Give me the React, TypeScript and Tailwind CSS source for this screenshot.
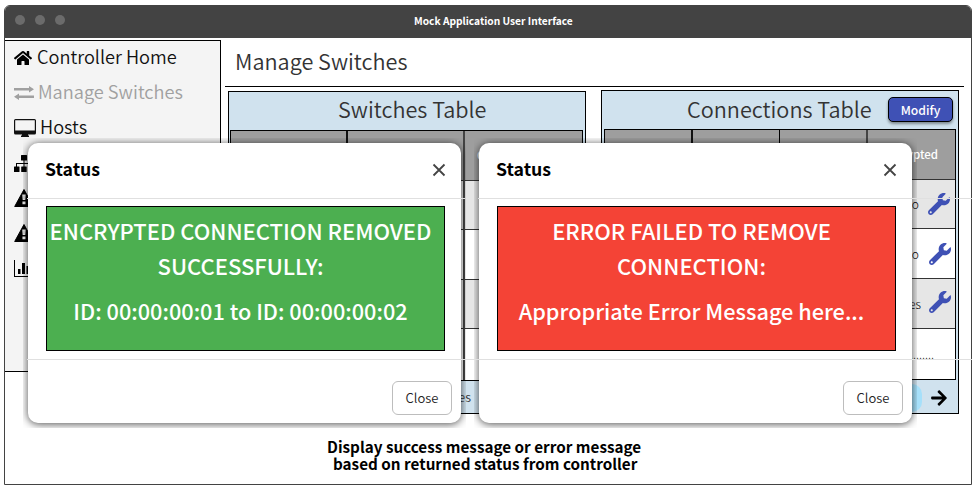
import type { ReactNode } from "react";
import { FaArrowRight, FaHome, FaWrench } from "react-icons/fa";

function ExchangeIcon() {
  return (
    <svg width="20" height="14" viewBox="0 0 20 14" fill="currentColor">
      <path d="M0 2h15V0l5 3.300-5 3.300V4.500H0z" />
      <path d="M20 9.500H5V7.400L0 10.700 5 14v-2h15z" />
    </svg>
  );
}

function MonitorIcon() {
  return (
    <svg width="22" height="18" viewBox="0 0 22 18" fill="currentColor">
      <path fillRule="evenodd" d="M1.500 0h19A1.500 1.500 0 0 1 22 1.500v12.500a1.500 1.500 0 0 1-1.500 1.500H14v1h1V18H7v-1.500h1v-1H1.500A1.500 1.500 0 0 1 0 14V1.500A1.500 1.500 0 0 1 1.500 0zM1.200 1.200v10.300h19.600V1.200z" />
    </svg>
  );
}

function SitemapIcon() {
  return (
    <svg width="20" height="17" viewBox="0 0 20 17" fill="currentColor">
      <rect x="7" y="0" width="6" height="5.500" rx="0.500" />
      <path d="M9.500 5h1v3h7.500v4h-1V9h-6.500v3h-1V9H3v3H2V8h7.500z" />
      <rect x="0" y="11.500" width="5.500" height="5.500" rx="0.500" />
      <rect x="7.200" y="11.500" width="5.500" height="5.500" rx="0.500" />
      <rect x="14.500" y="11.500" width="5.500" height="5.500" rx="0.500" />
    </svg>
  );
}

function WarningIcon() {
  return (
    <svg width="20" height="18" viewBox="0 0 20 18">
      <path d="M10 0.500L19.300 17.500H0.700z" fill="currentColor" stroke="currentColor" strokeLinejoin="round" />
      <path d="M8.300 5.500h3.400l-0.400 5.500h-2.600zM8.500 12.500h3v2.800h-3z" fill="#f4f4f4" />
      <path d="M9.500 6.500h1v3.500h-1z" fill="#bbb" />
    </svg>
  );
}

function ChartIcon() {
  return (
    <svg width="22" height="17" viewBox="0 0 22 17" fill="currentColor">
      <path d="M0 0h1v16h21v1H0zM4 9h2.500v5H4zM8 3h3v11H8zM12.500 6h2.500v8h-2.500zM16 2h3v12h-3z" />
    </svg>
  );
}

function NavItem({ icon, label, className }: { icon: ReactNode; label?: string; className: string }) {
  return (
    <div className={`flex h-[35px] items-center pl-[9px] text-[18.200px] leading-[33px] font-[350] whitespace-nowrap ${className}`}>
      {icon}
      {label && <span className="pb-[2px]">{label}</span>}
    </div>
  );
}

function Sidebar() {
  return (
    <nav className="-ml-px mt-[2px] h-[332px] w-[217px] shrink-0 border border-black bg-[#f4f4f4]">
      <div className="-mt-px">
        <NavItem className="gap-[5px] text-[#111]" icon={<FaHome className="h-[18px] w-[18px] text-black" />} label="Controller Home" />
        <NavItem className="gap-[4px] text-[#a0a0a0]" icon={<ExchangeIcon />} label="Manage Switches" />
        <NavItem className="gap-[4px] text-[#111]" icon={<MonitorIcon />} label="Hosts" />
        <NavItem className="pt-[2px] text-black" icon={<SitemapIcon />} />
        <NavItem className="text-black" icon={<WarningIcon />} />
        <NavItem className="text-black" icon={<WarningIcon />} />
        <NavItem className="pt-px text-black" icon={<ChartIcon />} />
      </div>
    </nav>
  );
}

function SwitchesPanel() {
  return (
    <section className="mt-px h-[323px] w-[358px] border border-black bg-[#d0e2ee] pl-px">
      <h2 className="h-[38px] pl-[108px] text-[21.650px] leading-[34px] font-[350] text-[#333]">Switches Table</h2>
      <div className="grid h-[251px] w-[353px] grid-cols-[117px_117px_117px] grid-rows-[50px_49px_50px_49px_51px] border border-black">
        {[0, 1, 2, 3, 4].map((row) =>
          [0, 1, 2].map((col) => (
            <div
              key={`${row}-${col}`}
              className={`flex items-center pl-[12px] text-[11.500px] font-medium whitespace-nowrap text-white ${row === 0 ? "bg-[#9e9e9e]" : row % 2 ? "bg-[#e6e6e6]" : "bg-white"} ${row < 4 ? "border-b border-b-[#333]" : ""} ${col === 0 ? "border-r-2 border-r-[#111]" : col === 1 ? "border-r-2 border-r-[#444]" : ""}`}
            >
              {row === 0 && col === 2 ? "Connected" : ""}
            </div>
          )),
        )}
      </div>
      <div className="flex h-[32px] w-[241px] items-center justify-end text-[12.500px] font-[350] text-[#333]">es</div>
    </section>
  );
}

const statuses = ["No", "No", "Yes", ".........."];

function ConnectionsPanel() {
  return (
    <section className="h-[324px] w-[358px] border border-black bg-[#d0e2ee] pl-[2px]">
      <div className="flex h-[38px] pl-[83px]">
        <h2 className="w-[201px] shrink-0 text-[21.650px] leading-[35px] font-[350] whitespace-nowrap text-[#333]">Connections Table</h2>
        <button className="mt-[6px] h-[25px] w-[65px] rounded-[5px] border border-black bg-[#3f51b5] text-[12.200px] leading-[22px] font-medium text-white shadow-[0_2px_3px_rgba(0,0,0,0.4)]">
          Modify
        </button>
      </div>
      <div className="grid h-[251px] w-[352px] grid-cols-[88px_87px_88px_87px] grid-rows-[50px_49px_50px_50px_50px] border border-black">
        {[0, 1, 2, 3, 4].map((row) =>
          [0, 1, 2, 3].map((col) => (
            <div
              key={`${row}-${col}`}
              className={`flex items-center ${row === 0 ? "bg-[#9e9e9e]" : row % 2 ? "bg-[#e6e6e6]" : "bg-white"} ${row < 4 ? "border-b border-b-[#333]" : ""} ${col === 0 ? "border-r-2 border-r-[#111]" : col === 1 ? "border-r border-r-black" : col === 2 ? "border-r-2 border-r-[#444]" : ""}`}
            >
              {row === 0 && col === 3 && <span className="w-[70px] text-right text-[11.500px] font-medium text-white">Encrypted</span>}
              {row > 0 && col === 3 && (
                <>
                  <span className={`shrink-0 text-right text-[12px] font-light text-black ${row === 4 ? "w-[66px]" : row === 3 ? "w-[53px]" : "w-[51px]"}`}>{statuses[row - 1]}</span>
                  {row < 4 && <FaWrench className={`h-[22px] w-[22px] shrink-0 text-[#3f51b5] ${row === 2 ? "ml-[10px]" : row === 1 ? "ml-[9px]" : "-mt-[3px] ml-[8px]"}`} />}
                </>
              )}
            </div>
          )),
        )}
      </div>
      <div className="flex h-[34px] items-center justify-end pt-px pr-[11px]">
        <span className="mr-[9px] h-[28px] w-[90px] rounded-[10px] bg-[#a6e0fa]" />
        <FaArrowRight className="h-[18px] w-[16px]" />
      </div>
    </section>
  );
}

function Dialog({ place, color, lines }: { place: string; color: string; lines: { text: string; style: string }[] }) {
  return (
    <div className={`absolute top-[138px] h-[290px] w-[443px] overflow-hidden p-[5px] ${place}`}>
      <div className="flex h-[280px] w-[433px] flex-col rounded-[10px] bg-white shadow-[0_1px_9px_rgba(0,0,0,0.7)]">
        <div className="flex h-[55px] shrink-0 items-center justify-between pr-[15px] pl-[17px]">
          <h3 className="pb-[4px] text-[17.700px] leading-[51px] font-bold text-black">Status</h3>
          <svg width="14" height="14" viewBox="0 0 14 14" className="mb-[2px] text-[#444]" stroke="currentColor" strokeWidth="1.800">
            <path d="M1.500 1.500l11 11M12.500 1.500l-11 11" />
          </svg>
        </div>
        <div className={`mt-[8px] ml-[18px] flex h-[145px] w-[399px] shrink-0 flex-col items-center border border-black pr-[10px] text-[22px] leading-[35px] font-medium whitespace-nowrap text-white ${color}`}>
          {lines.map((line) => (
            <p key={line.text} className={line.style}>{line.text}</p>
          ))}
        </div>
        <div className="mt-[30px] flex justify-end pr-[9px]">
          <button className="h-[34px] w-[60px] rounded-[6px] border border-[#bdbdbd] bg-white text-[13px] leading-[32px] font-[350] text-[#222]">Close</button>
        </div>
      </div>
    </div>
  );
}

export default function App() {
  return (
    <div className="relative h-[492px] w-[978px] overflow-hidden bg-white pt-[5px] pl-[4px] font-['Noto_Sans_CJK_SC',sans-serif]">
      <div className="h-[480px] w-[968px] overflow-hidden rounded-t-[6px] border border-[#434343]">
        <header className="flex h-[32px] items-center bg-[#434343] pl-[10px]">
          <div className="flex w-[399px] gap-[10px] pb-[4px]">
            <i className="h-[10px] w-[10px] rounded-full bg-[#6b6b6b]" />
            <i className="h-[10px] w-[10px] rounded-full bg-[#6b6b6b]" />
            <i className="h-[10px] w-[10px] rounded-full bg-[#6b6b6b]" />
          </div>
          <h1 className="pb-[2px] text-[10.200px] leading-[30px] font-bold text-white">Mock Application User Interface</h1>
        </header>
        <div className="flex">
          <Sidebar />
          <main className="w-[750px] pl-[4px]">
            <h2 className="h-[49px] w-[739px] border-b border-black pl-[10px] text-[21.650px] leading-[45px] font-[350] text-[#333]">Manage Switches</h2>
            <div className="mt-[3px] flex gap-[15px] pl-[3px]">
              <SwitchesPanel />
              <ConnectionsPanel />
            </div>
          </main>
        </div>
        <div className="mt-[24px] pl-[322px] text-[15.250px] leading-[17px] font-bold whitespace-nowrap text-black">
          <p>Display success message or error message</p>
          <p className="pl-[6px]">based on returned status from controller</p>
        </div>
      </div>
      <Dialog
        place="left-[23px]"
        color="bg-[#4caf50]"
        lines={[
          { text: "ENCRYPTED CONNECTION REMOVED", style: "mt-[6px]" },
          { text: "SUCCESSFULLY:", style: "" },
          { text: "ID: 00:00:00:01 to ID: 00:00:00:02", style: "mt-[10px] text-[21.700px]" },
        ]}
      />
      <Dialog
        place="left-[474px]"
        color="bg-[#f44336]"
        lines={[
          { text: "ERROR FAILED TO REMOVE", style: "mt-[6px]" },
          { text: "CONNECTION:", style: "" },
          { text: "Appropriate Error Message here...", style: "mt-[10px] text-[21.700px]" },
        ]}
      />
      <div className="absolute top-[198px] left-[27px] h-px w-[438px] bg-[#e0e0e0]" />
      <div className="absolute top-[198px] left-[478px] h-px w-[494px] bg-[#e0e0e0]" />
      <div className="absolute top-[359px] left-[27px] h-px w-[945px] bg-[#e0e0e0]" />
    </div>
  );
}
